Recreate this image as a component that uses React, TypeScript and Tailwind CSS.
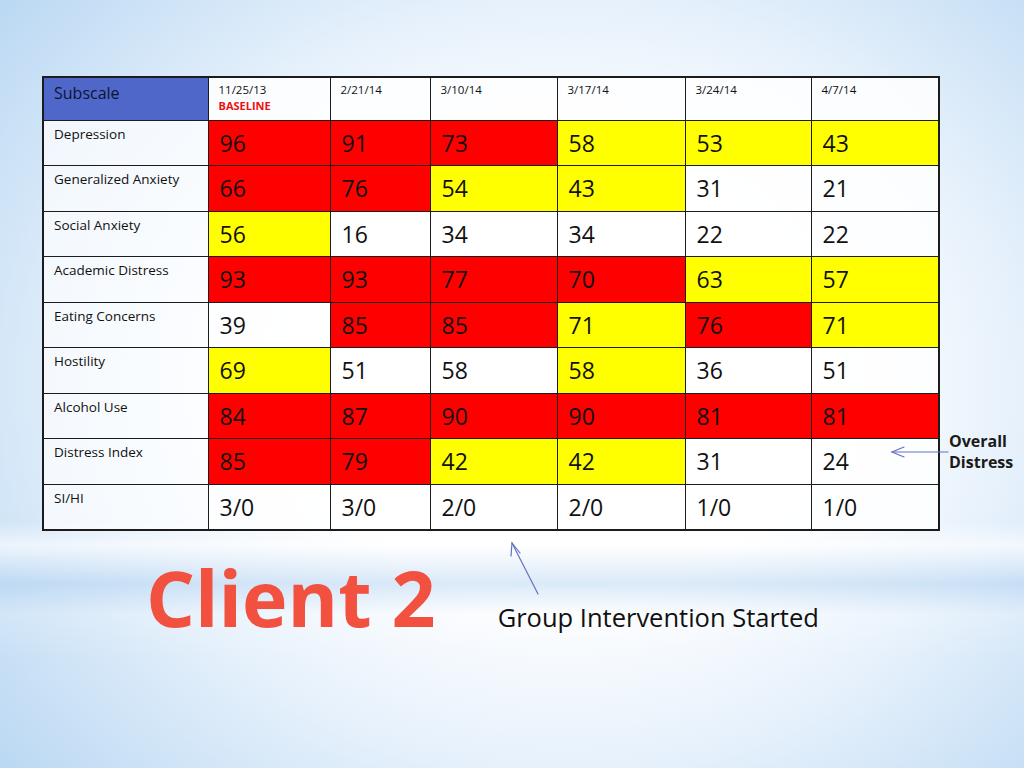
import React from 'react';

type Tone = 'r' | 'y' | 'w';

const dates = ['2/21/14', '3/10/14', '3/17/14', '3/24/14', '4/7/14'];

const rows: { label: string; cells: [string, Tone][] }[] = [
  { label: 'Depression', cells: [['96', 'r'], ['91', 'r'], ['73', 'r'], ['58', 'y'], ['53', 'y'], ['43', 'y']] },
  { label: 'Generalized Anxiety', cells: [['66', 'r'], ['76', 'r'], ['54', 'y'], ['43', 'y'], ['31', 'w'], ['21', 'w']] },
  { label: 'Social Anxiety', cells: [['56', 'y'], ['16', 'w'], ['34', 'w'], ['34', 'w'], ['22', 'w'], ['22', 'w']] },
  { label: 'Academic Distress', cells: [['93', 'r'], ['93', 'r'], ['77', 'r'], ['70', 'r'], ['63', 'y'], ['57', 'y']] },
  { label: 'Eating Concerns', cells: [['39', 'w'], ['85', 'r'], ['85', 'r'], ['71', 'y'], ['76', 'r'], ['71', 'y']] },
  { label: 'Hostility', cells: [['69', 'y'], ['51', 'w'], ['58', 'w'], ['58', 'y'], ['36', 'w'], ['51', 'w']] },
  { label: 'Alcohol Use', cells: [['84', 'r'], ['87', 'r'], ['90', 'r'], ['90', 'r'], ['81', 'r'], ['81', 'r']] },
  { label: 'Distress Index', cells: [['85', 'r'], ['79', 'r'], ['42', 'y'], ['42', 'y'], ['31', 'w'], ['24', 'w']] },
  { label: 'SI/HI', cells: [['3/0', 'w'], ['3/0', 'w'], ['2/0', 'w'], ['2/0', 'w'], ['1/0', 'w'], ['1/0', 'w']] },
];

const toneBg: Record<Tone, string> = {
  r: 'bg-[#ff0000]',
  y: 'bg-[#ffff00]',
  w: 'bg-white/85',
};

const colWidths = ['w-[165px]', 'w-[122px]', 'w-[100px]', 'w-[127px]', 'w-[128px]', 'w-[126px]', 'w-[128px]'];

export default function App() {
  return (
    <div
      className="relative h-[768px] w-full overflow-hidden text-[#111] bg-[image:linear-gradient(to_bottom,transparent_68%,rgba(255,255,255,0.6)_71%,rgba(165,202,238,0.4)_76%,rgba(255,255,255,0.15)_80%,transparent_86%),radial-gradient(ellipse_70%_78%_at_55%_50%,#ffffff_35%,#e8f2fc_62%,#bcd9f3_100%)]"
      style={{ fontFamily: '"Open Sans", "Noto Sans", sans-serif' }}
    >
      <div className="pl-[42px] pt-[76px]">
        <div className="flex items-start">
          <table className="table-fixed border-collapse border-2 border-[#1c1c1c]">
            <colgroup>
              {colWidths.map((w, i) => (
                <col key={i} className={w} />
              ))}
            </colgroup>
            <tbody>
              <tr className="h-[43px]">
                <td className="border border-[#1c1c1c] bg-[#4e67c8] pl-[10px] pt-[3px] align-top text-[16px] leading-[24px] text-[#0d1433]">
                  Subscale
                </td>
                <td className="border border-[#1c1c1c] bg-white/85 pl-[10px] pt-[4px] align-top leading-[16px]">
                  <div className="text-[11.5px]">11/25/13</div>
                  <div className="text-[11px] font-bold text-[#ee1111]">BASELINE</div>
                </td>
                {dates.map((d) => (
                  <td key={d} className="border border-[#1c1c1c] bg-white/85 pl-[10px] pt-[4px] align-top text-[11.5px] leading-[16px]">
                    {d}
                  </td>
                ))}
              </tr>
              {rows.map((row) => (
                <tr key={row.label} className="h-[45.5px]">
                  <td className="border border-[#1c1c1c] bg-white/70 pl-[10px] pt-[4px] align-top text-[13.5px] leading-[19px]">
                    {row.label}
                  </td>
                  {row.cells.map(([v, t], i) => (
                    <td
                      key={i}
                      className={`border border-[#1c1c1c] ${toneBg[t]} pl-[11px] pt-[7px] align-top text-[23px] leading-[30px]`}
                    >
                      {v}
                    </td>
                  ))}
                </tr>
              ))}
            </tbody>
          </table>
          <div className="ml-[9px] mt-[355px] text-[16px] font-bold leading-[21px] text-[#1a1a1a]">
            <div>Overall</div>
            <div>Distress</div>
          </div>
        </div>

        <div className="mt-[28px] flex items-baseline">
          <div className="ml-[104px] text-[77px] font-bold leading-none text-[#f2513f]">Client 2</div>
          <div className="ml-[62px] text-[25.5px] text-[#111]">Group Intervention Started</div>
        </div>
      </div>

      {/* annotation arrows */}
      <svg className="absolute left-0 top-0" width="1024" height="768" fill="none">
        <g stroke="#6470c4" strokeWidth="1.2" strokeLinecap="round">
          <line x1="948" y1="452" x2="892" y2="452" />
          <polyline points="904,447 892,452 904,457" />
          <line x1="538" y1="594" x2="512" y2="543" />
          <polyline points="511,556 512,543 520,553" />
        </g>
      </svg>
    </div>
  );
}
